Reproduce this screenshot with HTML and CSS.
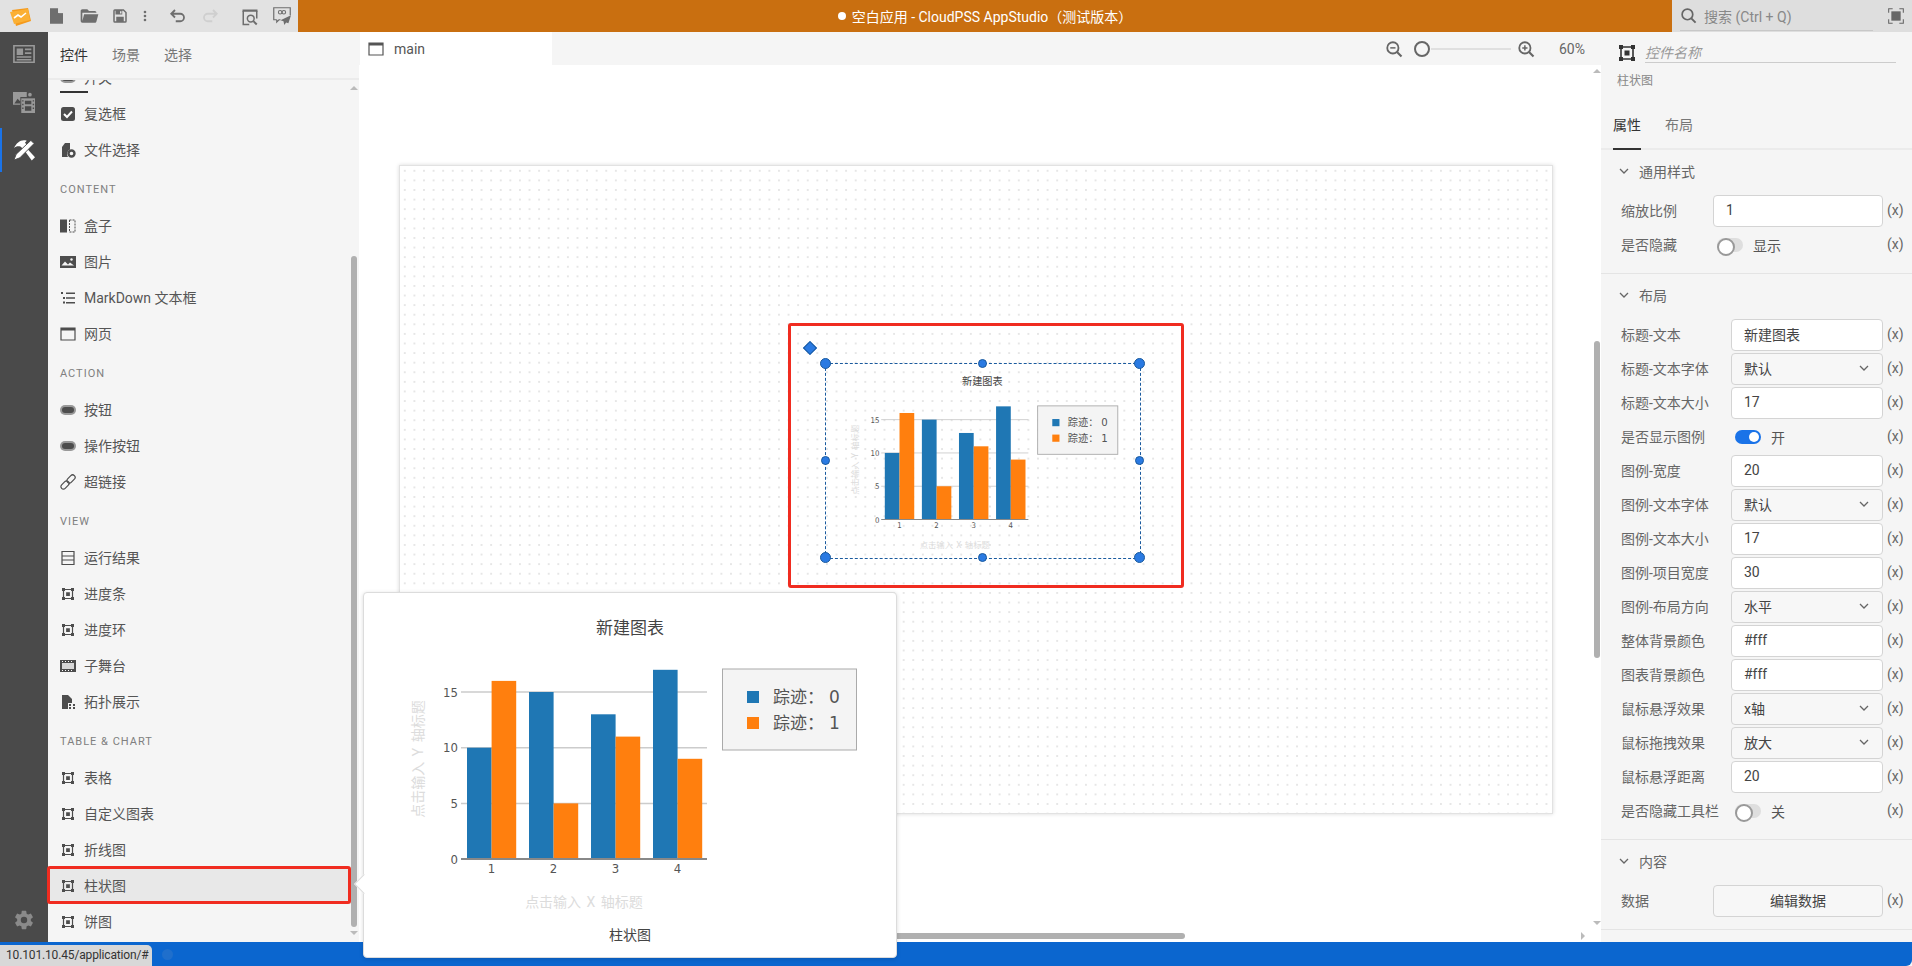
FILE: index.html
```html
<!DOCTYPE html>
<html lang="zh-CN">
<head>
    <meta charset="UTF-8">
    <title>空白应用 - CloudPSS AppStudio（测试版本）</title>
    <link rel="stylesheet" href="styles.css">
</head>
<body>
    <!-- shared icons -->
    <svg class="sprite" xmlns="http://www.w3.org/2000/svg">
        <symbol id="i-file" viewBox="0 0 16 20"><path d="M0 1h10l6 6v13H0zM10 1v6h6" fill="currentColor"/><path d="M10.500 1v5.500H16" fill="none" stroke="#e2e2e2"/></symbol>
        <symbol id="i-folder" viewBox="0 0 24 24"><path d="M19 20H4a2 2 0 0 1-2-2V6c0-1.110.89-2 2-2h6l2 2h7a2 2 0 0 1 2 2H4v10l2.140-8h17.070l-2.280 8.500c-.23.87-1.010 1.500-1.930 1.500z" fill="currentColor"/></symbol>
        <symbol id="i-save" viewBox="0 0 24 24"><path d="M17 3H5a2 2 0 0 0-2 2v14a2 2 0 0 0 2 2h14a2 2 0 0 0 2-2V7l-4-4m2 16H5V5h1v5h9V5h1.170L19 7.830V19M7 13h10v6H7zM12 5.500h2v3h-2z" fill="currentColor" fill-rule="evenodd"/></symbol>
        <symbol id="i-dots" viewBox="0 0 24 24"><path d="M12 16a2 2 0 1 1 0 4 2 2 0 0 1 0-4m0-6a2 2 0 1 1 0 4 2 2 0 0 1 0-4m0-6a2 2 0 1 1 0 4 2 2 0 0 1 0-4z" fill="currentColor"/></symbol>
        <symbol id="i-undo" viewBox="0 0 24 24"><path d="M8 4L3 9l5 5M3 9h12a5 5 0 0 1 0 10H9" fill="none" stroke="currentColor" stroke-width="2.400"/></symbol>
        <symbol id="i-preview" viewBox="0 0 24 24"><path d="M2 2h20v3H2z" fill="currentColor"/><path d="M3 4v18h8M21 4v10" fill="none" stroke="currentColor" stroke-width="2"/><circle cx="13" cy="14" r="4.500" fill="none" stroke="currentColor" stroke-width="2"/><path d="M16.500 17.500L21 22" stroke="currentColor" stroke-width="2.600"/></symbol>
        <symbol id="i-send" viewBox="0 0 24 24"><path d="M5 17H1V1h22v10M5 17v3l3-3h2" fill="none" stroke="currentColor" stroke-width="1.600"/><circle cx="9.500" cy="7" r="2.300" fill="none" stroke="currentColor" stroke-width="1.400"/><circle cx="14.500" cy="7" r="2.300" fill="none" stroke="currentColor" stroke-width="1.400"/><path d="M24 11L10 17.500l4 1.500 1 5 2.500-3.500 3 1z" fill="currentColor"/></symbol>
        <symbol id="i-search" viewBox="0 0 24 24"><circle cx="10.500" cy="10.500" r="7.500" fill="none" stroke="currentColor" stroke-width="2.400"/><path d="M16 16l6 6" stroke="currentColor" stroke-width="2.800"/></symbol>
        <symbol id="i-full" viewBox="0 0 24 24"><path d="M1 7V1h6M17 1h6v6M23 17v6h-6M7 23H1v-6" fill="none" stroke="currentColor" stroke-width="1.600"/><path d="M5 5h14v14H5z" fill="currentColor"/></symbol>
        <symbol id="i-news" viewBox="0 0 24 20"><path d="M1 1h22v18H1z" fill="none" stroke="currentColor" stroke-width="1.800"/><path d="M4 4h7v7H4zM13 4h7v2h-7zM13 8h7v2h-7zM4 12.500h16v1.500H4zM4 15.500h16v1.500H4z" fill="currentColor"/></symbol>
        <symbol id="i-media" viewBox="0 0 24 24"><path d="M0 1h15v5.500H8v8.500H0z" fill="currentColor"/><path d="M1.500 13.500l3.500-5 3 3v2z" fill="#4a4a4a"/><path d="M9 8h15v16H9z" fill="currentColor"/><path d="M13 10.500h7v4h-7zM13 16.500h7v5h-7z" fill="#4a4a4a"/><path d="M10 10h1.500v1.500H10zM10 14h1.500v1.500H10zM10 18h1.500v1.500H10zM21.500 10H23v1.500h-1.500zM21.500 14H23v1.500h-1.500zM21.500 18H23v1.500h-1.500z" fill="#4a4a4a"/><circle cx="18.500" cy="4" r="2" fill="currentColor"/></symbol>
        <symbol id="i-tools" viewBox="0 0 24 24"><path d="M1 10C4 4 9 0 15 2l-2 2 3 3-4.500 4.500-3-3C6 7.500 3 8 1 10z" fill="currentColor"/><path d="M12.500 12.500l2.500-2.500 9 10-3.500 3.500z" fill="currentColor"/><path d="M19.500 1.500L23 5 7.500 20.500 1 23l2.500-6.500z" fill="currentColor" stroke="#4a4a4a" stroke-width="1"/></symbol>
        <symbol id="i-gear" viewBox="0 0 24 24"><path d="M12 15.500A3.500 3.500 0 0 1 8.500 12 3.500 3.500 0 0 1 12 8.500a3.500 3.500 0 0 1 3.500 3.500 3.500 3.500 0 0 1-3.500 3.500m7.430-2.530c.04-.32.07-.64.07-.97s-.03-.66-.07-1l2.110-1.630c.19-.15.24-.42.12-.64l-2-3.460c-.12-.22-.39-.31-.61-.22l-2.490 1c-.52-.39-1.060-.73-1.690-.98l-.37-2.650A.506.506 0 0 0 14 2h-4c-.25 0-.46.18-.5.420l-.37 2.650c-.63.25-1.170.59-1.690.98l-2.490-1c-.22-.09-.49 0-.61.220l-2 3.460c-.13.22-.07.49.12.64L4.570 11c-.04.34-.07.67-.07 1s.03.65.07.97l-2.110 1.660c-.19.15-.25.42-.12.64l2 3.460c.12.22.39.3.61.22l2.490-1.010c.52.4 1.060.74 1.690.99l.37 2.650c.04.24.25.42.5.42h4c.25 0 .46-.18.5-.42l.37-2.650c.63-.26 1.170-.59 1.690-.99l2.490 1.010c.22.08.49 0 .61-.22l2-3.460c.12-.22.07-.49-.12-.64l-2.110-1.660z" fill="currentColor"/></symbol>
        <symbol id="i-check" viewBox="0 0 16 16"><rect x="1" y="1" width="14" height="14" rx="2.500" fill="currentColor"/><path d="M4 8l3 3 5-5.500" fill="none" stroke="#fff" stroke-width="2"/></symbol>
        <symbol id="i-pick" viewBox="0 0 16 16"><path d="M2 5l3-4h5v6.500A5 5 0 0 0 8 15H2z" fill="currentColor"/><circle cx="11.500" cy="11.500" r="3" fill="none" stroke="currentColor" stroke-width="2.400"/></symbol>
        <symbol id="i-box" viewBox="0 0 16 16"><path d="M0 1.500h7v13H0z" fill="currentColor"/><path d="M9.500 2h5.500v12H9.500z" fill="none" stroke="currentColor" stroke-dasharray="2 1"/></symbol>
        <symbol id="i-image" viewBox="0 0 16 16"><path d="M0 2h16v12H0z" fill="currentColor"/><path d="M1.500 11.500l3.500-4 3 3 2-2 4 3z" fill="#f5f5f5"/><circle cx="11.500" cy="5.500" r="1.200" fill="#f5f5f5"/></symbol>
        <symbol id="i-md" viewBox="0 0 16 16"><path d="M6 2.500h9v1.500H6zM6 7.250h9v1.500H6zM6 12h9v1.500H6zM1 2h2v2H1zM3 7h2v2H3zM3 11.500h2v2H3z" fill="currentColor"/></symbol>
        <symbol id="i-web" viewBox="0 0 16 16"><path d="M1 2h14v12H1z" fill="none" stroke="currentColor" stroke-width="1.200"/><path d="M1 2h14v2.500H1z" fill="currentColor"/></symbol>
        <symbol id="i-btn" viewBox="0 0 16 16"><rect x="0" y="3" width="16" height="10" rx="5" fill="#999"/><rect x="2" y="5" width="12" height="6" rx="3" fill="currentColor"/></symbol>
        <symbol id="i-link" viewBox="0 0 16 16"><g fill="none" stroke="currentColor" stroke-width="1.200" transform="rotate(-45 8 8)"><rect x="-1" y="5.500" width="9.500" height="5" rx="2.500"/><rect x="7.500" y="5.500" width="9.500" height="5" rx="2.500"/></g></symbol>
        <symbol id="i-rows" viewBox="0 0 16 16"><path d="M2 1.500h12v13H2zM2 6h12M2 10h12" fill="none" stroke="currentColor" stroke-width="1.200"/></symbol>
        <symbol id="i-ctrl" viewBox="0 0 16 16"><path d="M2 2h12v12H2z" fill="none" stroke="currentColor" stroke-width="1.600"/><path d="M0 0h4v4H0zM12 0h4v4h-4zM0 12h4v4H0zM12 12h4v4h-4zM5.500 5.500h5v5h-5z" fill="currentColor"/></symbol>
        <symbol id="i-stage" viewBox="0 0 16 16"><path d="M0 2h16v12H0z" fill="currentColor"/><path d="M2 5h12v6H2z" fill="#d8d8d8"/><path d="M2 3h1v1H2zM5 3h1v1H5zM8 3h1v1H8zM11 3h1v1h-1zM2 12h1v1H2zM5 12h1v1H5zM8 12h1v1H8zM11 12h1v1h-1z" fill="#fff"/></symbol>
        <symbol id="i-topo" viewBox="0 0 16 16"><path d="M2 1h6l4 4v4H8v6H2z" fill="currentColor"/><path d="M9 10h2v2H9zM13 10h2v2h-2zM9 13h2v2H9zM13 13h2v2h-2z" fill="currentColor"/></symbol>
        <symbol id="i-chev" viewBox="0 0 10 6"><path d="M1 1l4 4 4-4" fill="none" stroke="currentColor" stroke-width="1.300"/></symbol>
    </svg>

    <div class="app">
        <header class="titlebar">
            <div class="quick-tools">
                <svg class="logo" viewBox="0 0 22 20"><path d="M3 3l16-2 3 13-15 5z" fill="#f59a1b"/><path d="M1 5l18-3 2 11-16 4z" fill="#fbb034"/><path d="M5 11l4-3 3 2 5-4" fill="none" stroke="#fff" stroke-width="1.600"/></svg>
                <svg class="tool tool-file"><use href="#i-file"/></svg>
                <svg class="tool tool-folder"><use href="#i-folder"/></svg>
                <svg class="tool tool-save"><use href="#i-save"/></svg>
                <svg class="tool tool-dots"><use href="#i-dots"/></svg>
                <svg class="tool tool-undo"><use href="#i-undo"/></svg>
                <svg class="tool tool-redo"><use href="#i-undo"/></svg>
                <svg class="tool tool-preview"><use href="#i-preview"/></svg>
                <svg class="tool tool-send"><use href="#i-send"/></svg>
            </div>
            <div class="app-title"><span class="dirty-dot"></span>空白应用 - CloudPSS AppStudio（测试版本）</div>
            <div class="search-box">
                <div class="search-field"><svg class="search-ico"><use href="#i-search"/></svg>搜索 (Ctrl + Q)</div>
                <svg class="full-ico"><use href="#i-full"/></svg>
            </div>
        </header>

        <div class="main">
            <nav class="rail">
                <div class="rail-item"><svg><use href="#i-news"/></svg></div>
                <div class="rail-item"><svg><use href="#i-media"/></svg></div>
                <div class="rail-item active"><svg><use href="#i-tools"/></svg></div>
                <div class="rail-item rail-gear"><svg><use href="#i-gear"/></svg></div>
            </nav>

            <aside class="sidebar">
                <div class="tabs side-tabs">
                    <div class="tab active">控件</div>
                    <div class="tab">场景</div>
                    <div class="tab">选择</div>
                </div>
                <div class="widget-list">
                    <div class="widget"><svg class="ico"><use href="#i-btn"/></svg>开关</div>
                    <div class="widget"><svg class="ico"><use href="#i-check"/></svg>复选框</div>
                    <div class="widget"><svg class="ico"><use href="#i-pick"/></svg>文件选择</div>
                    <div class="group">CONTENT</div>
                    <div class="widget"><svg class="ico"><use href="#i-box"/></svg>盒子</div>
                    <div class="widget"><svg class="ico"><use href="#i-image"/></svg>图片</div>
                    <div class="widget"><svg class="ico"><use href="#i-md"/></svg>MarkDown 文本框</div>
                    <div class="widget"><svg class="ico"><use href="#i-web"/></svg>网页</div>
                    <div class="group">ACTION</div>
                    <div class="widget"><svg class="ico"><use href="#i-btn"/></svg>按钮</div>
                    <div class="widget"><svg class="ico"><use href="#i-btn"/></svg>操作按钮</div>
                    <div class="widget"><svg class="ico"><use href="#i-link"/></svg>超链接</div>
                    <div class="group">VIEW</div>
                    <div class="widget"><svg class="ico"><use href="#i-rows"/></svg>运行结果</div>
                    <div class="widget"><svg class="ico ctrl"><use href="#i-ctrl"/></svg>进度条</div>
                    <div class="widget"><svg class="ico ctrl"><use href="#i-ctrl"/></svg>进度环</div>
                    <div class="widget"><svg class="ico"><use href="#i-stage"/></svg>子舞台</div>
                    <div class="widget"><svg class="ico"><use href="#i-topo"/></svg>拓扑展示</div>
                    <div class="group">TABLE &amp; CHART</div>
                    <div class="widget"><svg class="ico ctrl"><use href="#i-ctrl"/></svg>表格</div>
                    <div class="widget"><svg class="ico ctrl"><use href="#i-ctrl"/></svg>自定义图表</div>
                    <div class="widget"><svg class="ico ctrl"><use href="#i-ctrl"/></svg>折线图</div>
                    <div class="widget hover"><svg class="ico ctrl"><use href="#i-ctrl"/></svg>柱状图</div>
                    <div class="widget"><svg class="ico ctrl"><use href="#i-ctrl"/></svg>饼图</div>
                </div>
                <div class="sb-arrow up side-up"></div>
                <div class="sb-thumb side-thumb"></div>
                <div class="sb-arrow down side-down"></div>
            </aside>

            <section class="workspace">
                <div class="work-bar">
                    <div class="page-tab"><svg class="page-ico"><use href="#i-web"/></svg>main</div>
                    <div class="zoom-ctl">
                        <svg class="zoom-ico" viewBox="0 0 24 24"><circle cx="10.500" cy="10.500" r="7.500" fill="none" stroke="currentColor" stroke-width="2.400"/><path d="M16 16l6 6" stroke="currentColor" stroke-width="2.800"/><path d="M7 10.500h7" stroke="currentColor" stroke-width="2"/></svg>
                        <div class="zoom-knob"></div>
                        <div class="zoom-track"></div>
                        <svg class="zoom-ico" viewBox="0 0 24 24"><circle cx="10.500" cy="10.500" r="7.500" fill="none" stroke="currentColor" stroke-width="2.400"/><path d="M16 16l6 6" stroke="currentColor" stroke-width="2.800"/><path d="M7 10.500h7M10.500 7v7" stroke="currentColor" stroke-width="2"/></svg>
                        <span class="zoom-val">60%</span>
                    </div>
                </div>
                <div class="canvas">
                    <div class="paper">
                        <div class="red-mark"></div>
                        <div class="rotate-pin"></div>
                        <div class="selection">
                            <svg class="chart" viewBox="0 0 526 326">
                                <text class="c-title" x="261" y="35">新建图表</text>
                                <text class="c-hint" transform="translate(54 160) rotate(-90)">点击输入 Y 轴标题</text>
                                <text class="c-hint" x="215" y="308">点击输入 X 轴标题</text>
                                <path d="M92 93H338M92 148.700H338M92 204.400H338" stroke="#ccc" stroke-width="1.500"/>
                                <g fill="#1f77b4">
                                    <rect x="98" y="148.700" width="24.600" height="111.300"/>
                                    <rect x="160" y="93" width="24.600" height="167"/>
                                    <rect x="222" y="115.300" width="24.600" height="144.700"/>
                                    <rect x="284" y="70.800" width="24.600" height="189.200"/>
                                </g>
                                <g fill="#ff7f0e">
                                    <rect x="122.600" y="81.900" width="24.600" height="178.100"/>
                                    <rect x="184.600" y="204.400" width="24.600" height="55.600"/>
                                    <rect x="246.600" y="137.600" width="24.600" height="122.400"/>
                                    <rect x="308.600" y="159.800" width="24.600" height="100.200"/>
                                </g>
                                <path d="M92 260H338" stroke="#888" stroke-width="2"/>
                                <g class="c-tick c-tick-y">
                                    <text x="89" y="265">0</text>
                                    <text x="89" y="209">5</text>
                                    <text x="89" y="153">10</text>
                                    <text x="89" y="98">15</text>
                                </g>
                                <g class="c-tick">
                                    <text x="122.600" y="274">1</text>
                                    <text x="184.600" y="274">2</text>
                                    <text x="246.600" y="274">3</text>
                                    <text x="308.600" y="274">4</text>
                                </g>
                                <rect x="353.500" y="70" width="134" height="81" fill="#f4f4f4" stroke="#aaa" stroke-width="1.500"/>
                                <rect x="378" y="92" width="12" height="12" fill="#1f77b4"/>
                                <rect x="378" y="118" width="12" height="12" fill="#ff7f0e"/>
                                <text class="c-legend" x="404" y="104">踪迹：</text>
                                <text class="c-legend" x="404" y="130">踪迹：</text>
                                <text class="c-legend c-num" x="460" y="104">0</text>
                                <text class="c-legend c-num" x="460" y="130">1</text>
                            </svg>
                            <span class="handle big h-tl"></span>
                            <span class="handle h-tc"></span>
                            <span class="handle big h-tr"></span>
                            <span class="handle h-ml"></span>
                            <span class="handle h-mr"></span>
                            <span class="handle big h-bl"></span>
                            <span class="handle h-bc"></span>
                            <span class="handle big h-br"></span>
                        </div>
                    </div>
                    <div class="sb-arrow up canvas-up"></div>
                    <div class="sb-thumb canvas-thumb"></div>
                    <div class="sb-arrow down canvas-down"></div>
                    <div class="sb-thumb canvas-hthumb"></div>
                    <div class="sb-arrow right canvas-right"></div>
                </div>
            </section>

            <aside class="props">
                <div class="prop-name">
                    <svg class="prop-ico"><use href="#i-ctrl"/></svg>
                    <div class="name-input">控件名称</div>
                </div>
                <div class="prop-type">柱状图</div>
                <div class="tabs prop-tabs">
                    <div class="tab active">属性</div>
                    <div class="tab">布局</div>
                </div>

                <div class="section">
                    <div class="section-head"><svg class="chev"><use href="#i-chev"/></svg>通用样式</div>
                    <div class="row short"><label>缩放比例</label><div class="field">1</div><span class="fx">(x)</span></div>
                    <div class="row short"><label>是否隐藏</label><div class="toggle"><span class="switch"></span>显示</div><span class="fx">(x)</span></div>
                </div>

                <div class="section">
                    <div class="section-head"><svg class="chev"><use href="#i-chev"/></svg>布局</div>
                    <div class="row"><label>标题-文本</label><div class="field">新建图表</div><span class="fx">(x)</span></div>
                    <div class="row"><label>标题-文本字体</label><div class="field select">默认<svg class="chev"><use href="#i-chev"/></svg></div><span class="fx">(x)</span></div>
                    <div class="row"><label>标题-文本大小</label><div class="field">17</div><span class="fx">(x)</span></div>
                    <div class="row"><label>是否显示图例</label><div class="toggle"><span class="switch on"></span>开</div><span class="fx">(x)</span></div>
                    <div class="row"><label>图例-宽度</label><div class="field">20</div><span class="fx">(x)</span></div>
                    <div class="row"><label>图例-文本字体</label><div class="field select">默认<svg class="chev"><use href="#i-chev"/></svg></div><span class="fx">(x)</span></div>
                    <div class="row"><label>图例-文本大小</label><div class="field">17</div><span class="fx">(x)</span></div>
                    <div class="row"><label>图例-项目宽度</label><div class="field">30</div><span class="fx">(x)</span></div>
                    <div class="row"><label>图例-布局方向</label><div class="field select">水平<svg class="chev"><use href="#i-chev"/></svg></div><span class="fx">(x)</span></div>
                    <div class="row"><label>整体背景颜色</label><div class="field">#fff</div><span class="fx">(x)</span></div>
                    <div class="row"><label>图表背景颜色</label><div class="field">#fff</div><span class="fx">(x)</span></div>
                    <div class="row"><label>鼠标悬浮效果</label><div class="field select">x轴<svg class="chev"><use href="#i-chev"/></svg></div><span class="fx">(x)</span></div>
                    <div class="row"><label>鼠标拖拽效果</label><div class="field select">放大<svg class="chev"><use href="#i-chev"/></svg></div><span class="fx">(x)</span></div>
                    <div class="row"><label>鼠标悬浮距离</label><div class="field">20</div><span class="fx">(x)</span></div>
                    <div class="row"><label>是否隐藏工具栏</label><div class="toggle"><span class="switch"></span>关</div><span class="fx">(x)</span></div>
                </div>

                <div class="section">
                    <div class="section-head"><svg class="chev"><use href="#i-chev"/></svg>内容</div>
                    <div class="row short"><label>数据</label><div class="field button">编辑数据</div><span class="fx">(x)</span></div>
                </div>
            </aside>
        </div>

        <footer class="statusbar"><span class="status-dot"></span></footer>

        <!-- overlays -->
        <div class="item-mark"></div>
        <div class="preview">
            <div class="preview-arrow"></div>
            <svg class="preview-chart" viewBox="0 0 526 326">
                <text class="c-title" x="261" y="35">新建图表</text>
                <text class="c-hint" transform="translate(54 160) rotate(-90)">点击输入 Y 轴标题</text>
                <text class="c-hint" x="215" y="308">点击输入 X 轴标题</text>
                <path d="M92 93H338M92 148.700H338M92 204.400H338" stroke="#ccc" stroke-width="1.500"/>
                <g fill="#1f77b4">
                    <rect x="98" y="148.700" width="24.600" height="111.300"/>
                    <rect x="160" y="93" width="24.600" height="167"/>
                    <rect x="222" y="115.300" width="24.600" height="144.700"/>
                    <rect x="284" y="70.800" width="24.600" height="189.200"/>
                </g>
                <g fill="#ff7f0e">
                    <rect x="122.600" y="81.900" width="24.600" height="178.100"/>
                    <rect x="184.600" y="204.400" width="24.600" height="55.600"/>
                    <rect x="246.600" y="137.600" width="24.600" height="122.400"/>
                    <rect x="308.600" y="159.800" width="24.600" height="100.200"/>
                </g>
                <path d="M92 260H338" stroke="#888" stroke-width="2"/>
                <g class="c-tick c-tick-y">
                    <text x="89" y="265">0</text>
                    <text x="89" y="209">5</text>
                    <text x="89" y="153">10</text>
                    <text x="89" y="98">15</text>
                </g>
                <g class="c-tick">
                    <text x="122.600" y="274">1</text>
                    <text x="184.600" y="274">2</text>
                    <text x="246.600" y="274">3</text>
                    <text x="308.600" y="274">4</text>
                </g>
                <rect x="353.500" y="70" width="134" height="81" fill="#f4f4f4" stroke="#aaa" stroke-width="1"/>
                <rect x="378" y="92" width="12" height="12" fill="#1f77b4"/>
                <rect x="378" y="118" width="12" height="12" fill="#ff7f0e"/>
                <text class="c-legend" x="404" y="104">踪迹：</text>
                <text class="c-legend" x="404" y="130">踪迹：</text>
                <text class="c-legend c-num" x="460" y="104">0</text>
                <text class="c-legend c-num" x="460" y="130">1</text>
            </svg>
            <div class="preview-name">柱状图</div>
        </div>
        <div class="url-tip">10.101.10.45/application/#</div>
    </div>
</body>
</html>
```

FILE: styles.css
```css
* {
    box-sizing: border-box;
}
html, body {
    margin: 0;
    height: 100%;
    overflow: hidden;
}
body {
    font-family: Roboto, "Noto Sans CJK SC", sans-serif;
    font-size: 14px;
    color: #555;
    background-color: #f5f5f5;
}
.sprite {
    position: absolute;
    width: 0;
    height: 0;
}
.app {
    position: relative;
    display: flex;
    flex-direction: column;
    height: 966px;
}

/* title bar */
.titlebar {
    display: flex;
    height: 32px;
    flex: none;
}
.quick-tools {
    position: relative;
    width: 298px;
    background-color: #e2e2e2;
    color: #6e6e6e;
}
.logo {
    position: absolute;
    left: 9px;
    top: 7px;
    width: 22px;
    height: 20px;
}
.tool {
    position: absolute;
}
.tool-file { left: 50px; top: 7px; width: 13px; height: 17px; }
.tool-folder { left: 79px; top: 6px; width: 20px; height: 20px; }
.tool-save { left: 111px; top: 7px; width: 18px; height: 18px; }
.tool-dots { left: 137px; top: 6px; width: 16px; height: 20px; }
.tool-undo { left: 169px; top: 7px; width: 18px; height: 18px; }
.tool-redo { left: 201px; top: 7px; width: 18px; height: 18px; color: #cfcfcf; transform: scaleX(-1); }
.tool-preview { left: 241px; top: 8px; width: 18px; height: 18px; }
.tool-send { left: 273px; top: 7px; width: 18px; height: 18px; }
.app-title {
    flex: 1;
    display: flex;
    align-items: center;
    justify-content: center;
    background-color: #c96f10;
    color: #fff;
}
.dirty-dot {
    width: 8px;
    height: 8px;
    border-radius: 50%;
    background-color: #fff;
    margin-right: 6px;
}
.search-box {
    width: 240px;
    display: flex;
    align-items: center;
    background-color: #dedede;
    color: #888;
    padding: 0 8px;
    justify-content: space-between;
}
.search-field {
    display: flex;
    align-items: center;
    width: 193px;
    height: 30px;
    border-bottom: 1px solid #c8c8c8;
}
.search-ico {
    width: 17px;
    height: 17px;
    margin-right: 7px;
    color: #666;
}
.full-ico {
    width: 16px;
    height: 16px;
    color: #666;
}

/* main */
.main {
    flex: 1;
    display: flex;
    min-height: 0;
}
.rail {
    width: 48px;
    flex: none;
    display: flex;
    flex-direction: column;
    gap: 4px;
    background-color: #4a4a4a;
    color: #999;
}
.rail-item {
    height: 44px;
    display: flex;
    align-items: center;
    justify-content: center;
}
.rail-item svg {
    width: 22px;
    height: 22px;
}
.rail-item.active {
    color: #fff;
    border-left: 2px solid #1a73e8;
    padding-right: 2px;
}
.rail-gear {
    margin-top: auto;
    color: #8a8a8a;
}

/* left panel */
.sidebar {
    position: relative;
    width: 311px;
    flex: none;
    display: flex;
    flex-direction: column;
    background-color: #f5f5f5;
    overflow: hidden;
}
.tabs {
    display: flex;
    gap: 24px;
    border-bottom: 2px solid #ebebeb;
}
.tab {
    color: #777;
    line-height: 20px;
}
.tab.active {
    color: #333;
    position: relative;
}
.tab.active::after {
    content: "";
    position: absolute;
    left: 0;
    right: 0;
    bottom: -2px;
    height: 2px;
    background-color: #333;
}
.side-tabs {
    height: 48px;
    flex: none;
    padding: 13px 0 0 12px;
}
.side-tabs .tab.active::after {
    bottom: -15px;
}
.widget-list {
    flex: 1;
    width: 303px;
    overflow: hidden;
    min-height: 0;
    position: relative;
}
.widget {
    display: flex;
    align-items: center;
    height: 36px;
    padding-left: 12px;
    padding-bottom: 1px;
    line-height: 20px;
}
.widget:first-child {
    margin-top: -20px;
}
.widget.hover {
    background-color: #e8e8e8;
}
.group {
    height: 40px;
    padding: 4px 0 0 12px;
    line-height: 36px;
    font-size: 11px;
    letter-spacing: 1px;
    color: #808080;
}
.ico {
    width: 16px;
    height: 16px;
    margin-right: 8px;
    color: #4d4d4d;
    flex: none;
}
.ico.ctrl {
    padding: 2px;
}
.sb-thumb {
    position: absolute;
    background-color: #b0b0b0;
    border-radius: 3px;
}
.sb-arrow {
    position: absolute;
    width: 0;
    height: 0;
    border: 4px solid transparent;
}
.sb-arrow.up {
    border-top-width: 0;
    border-bottom-color: #bbb;
}
.sb-arrow.down {
    border-bottom-width: 0;
    border-top-color: #bbb;
}
.sb-arrow.right {
    border-right-width: 0;
    border-left-color: #bbb;
}
.side-up { left: 302px; top: 54px; }
.side-down { left: 302px; top: 899px; }
.side-thumb { left: 303px; top: 224px; width: 6px; height: 671px; }

/* middle */
.workspace {
    flex: 1;
    min-width: 0;
    display: flex;
    flex-direction: column;
}
.work-bar {
    height: 33px;
    flex: none;
    display: flex;
    background-color: #f5f5f5;
}
.page-tab {
    display: flex;
    align-items: center;
    width: 192px;
    margin-left: 1px;
    padding-left: 8px;
    background-color: #fff;
    color: #555;
}
.page-ico {
    width: 16px;
    height: 16px;
    margin-right: 10px;
}
.zoom-ctl {
    margin-left: auto;
    display: flex;
    align-items: center;
    padding-right: 16px;
    color: #666;
}
.zoom-ico {
    width: 18px;
    height: 18px;
}
.zoom-knob {
    width: 16px;
    height: 16px;
    margin-left: 11px;
    border: 2px solid #666;
    border-radius: 50%;
}
.zoom-track {
    width: 80px;
    height: 2px;
    margin: 0 6px 0 1px;
    background-color: #e0e0e0;
}
.zoom-val {
    margin-left: 24px;
}
.canvas {
    position: relative;
    flex: 1;
    min-height: 0;
    background-color: #fff;
    overflow: hidden;
    padding: 100px 0 0 40px;
}
.paper {
    position: relative;
    width: 1154px;
    height: 649px;
    background-color: #fff;
    background-image: radial-gradient(circle, #e6e6e6 0.8px, transparent 1.1px);
    background-size: 9.6px 9.6px;
    border: 1px solid #e2e2e2;
    box-shadow: 0 0 4px rgba(0, 0, 0, 0.15);
}
.red-mark {
    position: absolute;
    left: 388px;
    top: 157px;
    width: 396px;
    height: 265px;
    border: 3px solid #f02c20;
    border-radius: 3px;
}
.rotate-pin {
    position: absolute;
    left: 405px;
    top: 177px;
    width: 10px;
    height: 10px;
    background-color: #2a7ae2;
    border: 1px solid #1a5a9e;
    transform: rotate(45deg);
}
.selection {
    position: absolute;
    left: 425px;
    top: 197px;
    width: 316px;
    height: 196px;
    border: 1px dashed #1a5a9e;
}
.chart {
    position: absolute;
    left: 0;
    top: 0;
    width: 315px;
    height: 195px;
}
.handle {
    position: absolute;
    width: 9px;
    height: 9px;
    margin: -5px 0 0 -5px;
    background-color: #2a7ae2;
    border: 1px solid #1a5a9e;
    border-radius: 50%;
}
.handle.big {
    width: 11px;
    height: 11px;
    margin: -6px 0 0 -6px;
}
.h-tl { left: 0; top: 0; }
.h-tc { left: 50%; top: 0; }
.h-tr { left: 100%; top: 0; }
.h-ml { left: 0; top: 50%; }
.h-mr { left: 100%; top: 50%; }
.h-bl { left: 0; top: 100%; }
.h-bc { left: 50%; top: 100%; }
.h-br { left: 100%; top: 100%; }
.canvas-up { left: 1234px; top: 4px; }
.canvas-down { left: 1234px; top: 856px; }
.canvas-thumb { left: 1235px; top: 276px; width: 6px; height: 317px; }
.canvas-hthumb { left: 500px; top: 868px; width: 326px; height: 6px; }
.canvas-right { left: 1222px; top: 867px; }

/* chart text */
.c-title {
    font-size: 17px;
    fill: #444;
    text-anchor: middle;
}
.c-hint {
    font-size: 14px;
    fill: #dcdcdc;
    text-anchor: middle;
    word-spacing: 2px;
}
.c-tick {
    font-family: "DejaVu Sans Condensed", "DejaVu Sans", sans-serif;
    font-size: 13px;
    fill: #555;
    text-anchor: middle;
}
.c-tick-y {
    text-anchor: end;
}
.c-legend {
    font-size: 17px;
    fill: #555;
}
.c-num {
    font-family: "DejaVu Sans", sans-serif;
}

/* right panel */
.props {
    width: 311px;
    flex: none;
    background-color: #f5f5f5;
    overflow: hidden;
}
.prop-name {
    display: flex;
    align-items: center;
    height: 21px;
    margin: 10px 16px 0 18px;
}
.prop-ico {
    width: 16px;
    height: 16px;
    margin-right: 10px;
    color: #333;
}
.name-input {
    flex: 1;
    height: 21px;
    line-height: 22px;
    font-style: italic;
    color: #999;
    border-bottom: 1px solid #ccc;
}
.prop-type {
    margin: 10px 0 0 16px;
    font-size: 12px;
    line-height: 16px;
    color: #888;
}
.prop-tabs {
    padding: 26px 0 13px 12px;
}
.prop-tabs .tab.active::after {
    bottom: -15px;
}
.section {
    border-bottom: 1px solid #e4e4e4;
    padding-bottom: 12px;
}
.section-head {
    display: flex;
    align-items: center;
    height: 44px;
    margin-bottom: 1px;
    padding-left: 18px;
    padding-bottom: 2px;
    color: #666;
}
.section-head .chev {
    margin-right: 10px;
}
.chev {
    width: 10px;
    height: 6px;
    flex: none;
    color: #666;
}
.row {
    display: grid;
    grid-template-columns: 106px 1fr 17px;
    column-gap: 4px;
    align-items: center;
    height: 32px;
    margin-bottom: 2px;
    padding: 0 8px 0 20px;
}
.row:last-child {
    margin-bottom: 0;
}
.row.short {
    grid-template-columns: 88px 1fr 17px;
}
.row label {
    color: #666;
    white-space: nowrap;
    margin-top: -2px;
}
.fx {
    color: #666;
    margin-top: -2px;
}
.field {
    display: flex;
    align-items: center;
    justify-content: space-between;
    height: 32px;
    padding: 0 12px 2px;
    background-color: #fff;
    border: 1px solid #d4d4d4;
    border-radius: 4px;
    color: #444;
}
.field.select {
    background-color: #f7f7f7;
}
.field.select .chev {
    margin-right: 1px;
}
.field.button {
    justify-content: center;
    background-color: #f7f7f7;
}
.toggle {
    display: flex;
    align-items: center;
    padding-left: 4px;
    color: #555;
}
.switch {
    position: relative;
    width: 26px;
    height: 14px;
    margin-right: 10px;
    background-color: #dedede;
    border-radius: 7px;
}
.switch::after {
    content: "";
    position: absolute;
    left: 0;
    top: 0;
    width: 14px;
    height: 14px;
    background-color: #fff;
    border: 2px solid #999;
    border-radius: 50%;
}
.switch.on {
    background-color: #1a73e8;
}
.switch.on::after {
    left: 14px;
    top: 2px;
    width: 10px;
    height: 10px;
    border: 0;
}

/* status bar */
.statusbar {
    display: flex;
    align-items: center;
    height: 24px;
    flex: none;
    padding-left: 162px;
    background-color: #0b66cf;
    border-bottom-right-radius: 6px;
}
.status-dot {
    width: 11px;
    height: 11px;
    border-radius: 50%;
    background-color: #1f6fcc;
}

/* overlays */
.item-mark {
    position: absolute;
    left: 47px;
    top: 866px;
    width: 304px;
    height: 38px;
    border: 3px solid #f02c20;
    border-radius: 3px;
}
.preview {
    position: absolute;
    left: 363px;
    top: 592px;
    width: 534px;
    height: 366px;
    padding: 6px 0 0 5px;
    background-color: #fff;
    border: 1px solid #dcdcdc;
    border-radius: 4px;
    box-shadow: 0 1px 4px rgba(0, 0, 0, 0.15);
}
.preview-arrow {
    position: absolute;
    left: -7px;
    top: 284px;
    width: 14px;
    height: 14px;
    background-color: #fff;
    border-left: 1px solid #dcdcdc;
    border-bottom: 1px solid #dcdcdc;
    transform: rotate(45deg);
}
.preview-chart {
    display: block;
    position: relative;
    width: 526px;
    height: 326px;
}
.preview-name {
    line-height: 20px;
    text-align: center;
    color: #444;
    width: 522px;
}
.url-tip {
    position: absolute;
    left: 0;
    bottom: 0;
    width: 152px;
    height: 21px;
    padding-left: 6px;
    line-height: 21px;
    font-size: 12px;
    letter-spacing: -0.150px;
    white-space: nowrap;
    color: #333;
    background-color: #d8d8d8;
    border-top-right-radius: 5px;
}
```
